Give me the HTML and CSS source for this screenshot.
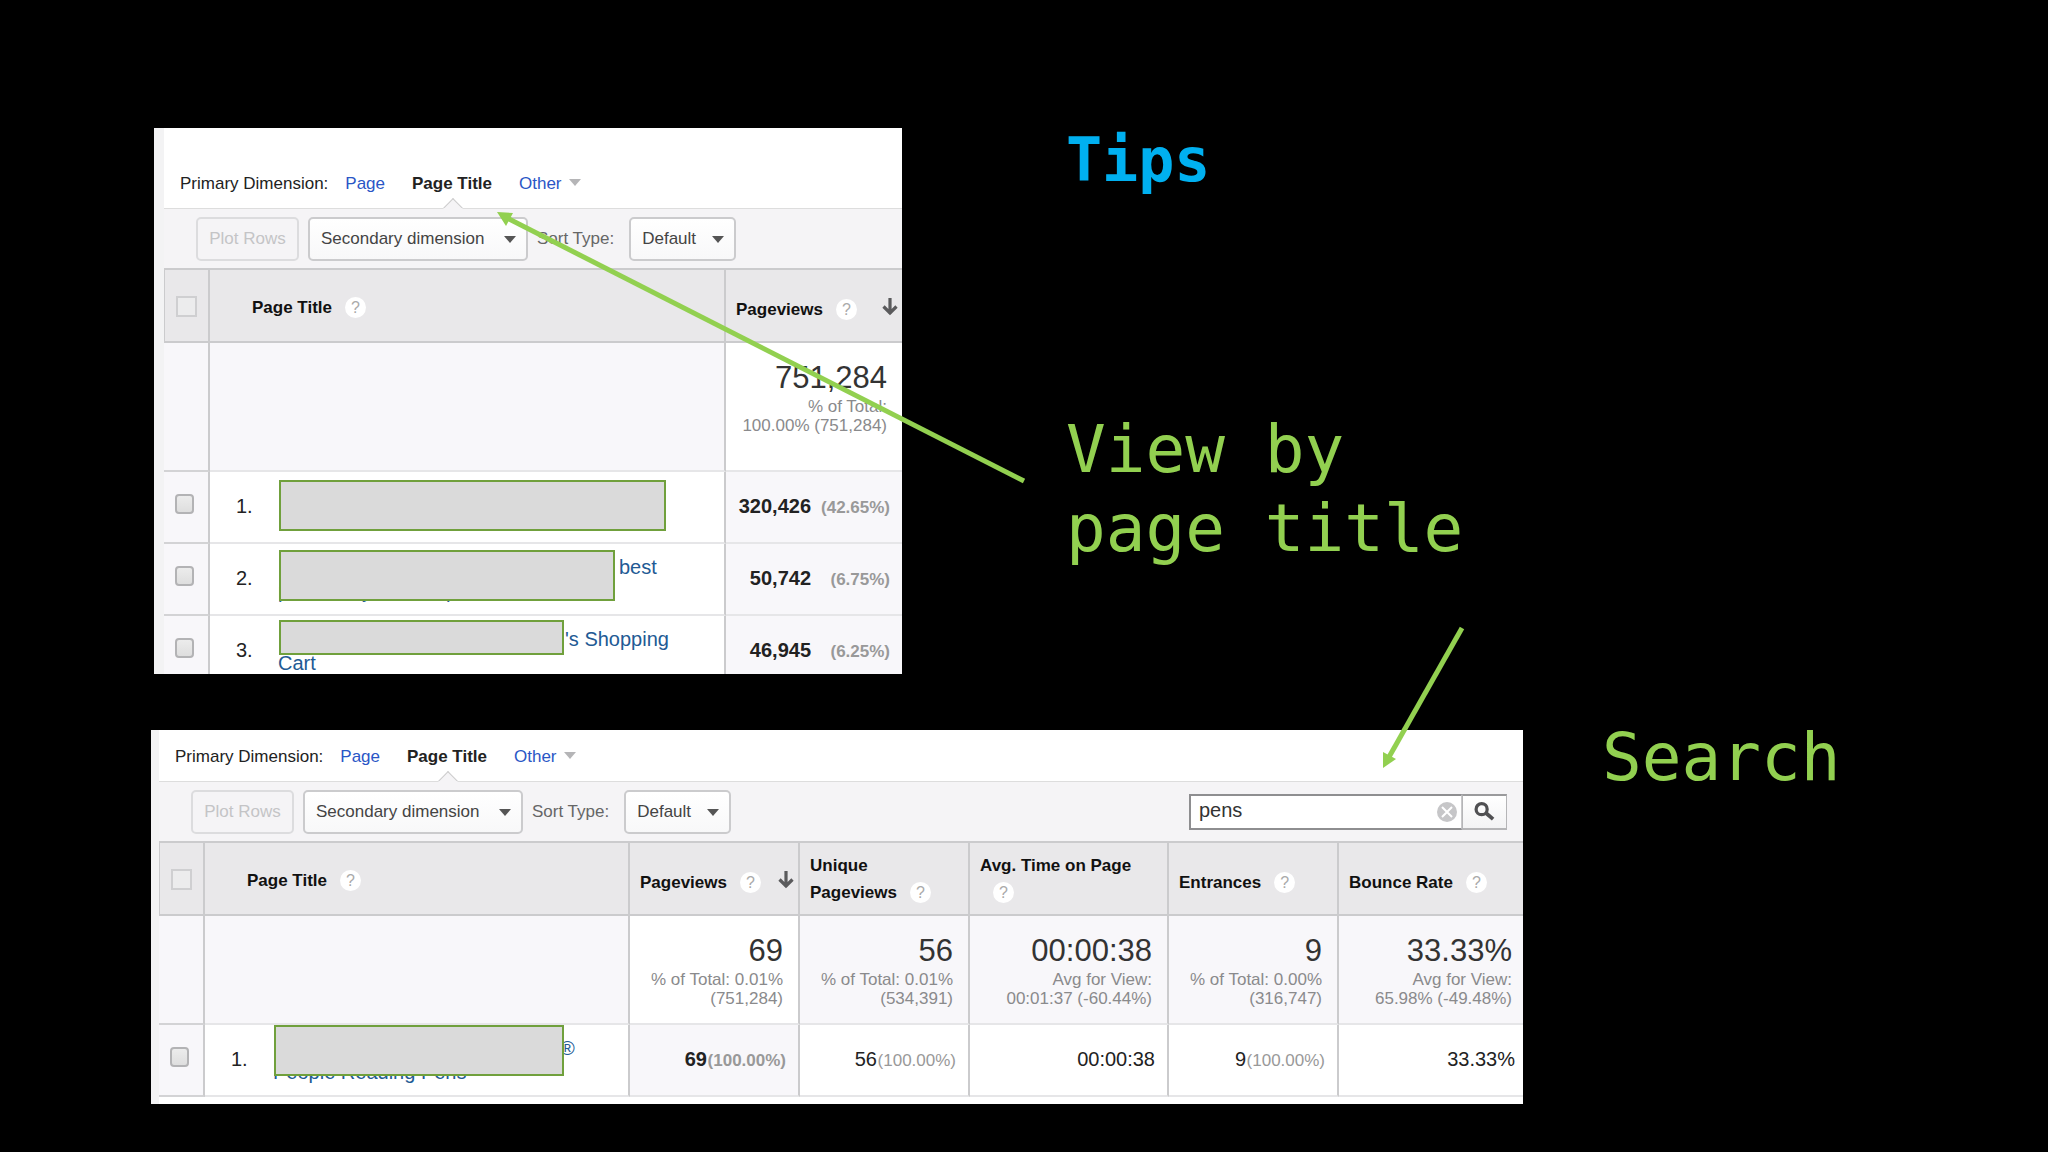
FILE: index.html
```html
<!DOCTYPE html>
<html lang="en">
<head>
  <meta charset="utf-8">
  <title>Tips</title>
  <link rel="stylesheet" href="styles.css">
</head>
<body>

<main class="slide">

  <section class="row-top">
    <div class="panel panel-title">
      <nav class="tabs">
        <span class="tabs-label">Primary Dimension:</span>
        <a href="#">Page</a>
        <a href="#" class="active">Page Title</a>
        <a href="#" class="has-caret">Other</a>
      </nav>

      <div class="toolbar">
        <button type="button" class="plot" disabled>Plot Rows</button>
        <span class="dropdown secondary">
          <select aria-label="Secondary dimension"><option>Secondary dimension</option></select>
        </span>
        <label for="sort1">Sort Type:</label>
        <span class="dropdown sort">
          <select id="sort1"><option>Default</option></select>
        </span>
      </div>

      <table>
        <colgroup>
          <col class="col-check"><col><col class="col-views">
        </colgroup>
        <thead>
          <tr>
            <th class="check"><input type="checkbox" aria-label="Select all" disabled></th>
            <th class="title">Page Title<span class="help">?</span></th>
            <th class="metric">Pageviews<span class="help">?</span>
              <svg class="sort-arrow" viewBox="0 0 16 18"><path d="M8 0v16M1.500 8.500L8 15l6.500-6.500" fill="none" stroke="#5a5a5c" stroke-width="3.200"/></svg>
            </th>
          </tr>
        </thead>
        <tbody>
          <tr class="summary">
            <td class="check"></td>
            <td></td>
            <td class="num sorted"><b>751,284</b><small>% of Total:<br>100.00% (751,284)</small></td>
          </tr>
          <tr>
            <td class="check"><input type="checkbox" aria-label="Select row 1"></td>
            <td class="name"><div><span class="index">1.</span><span class="redact wide"></span></div></td>
            <td class="num sorted">320,426<span class="pct">(42.65%)</span></td>
          </tr>
          <tr>
            <td class="check"><input type="checkbox" aria-label="Select row 2"></td>
            <td class="name"><div><span class="index">2.</span><a href="#" class="best"><span>best</span><span class="tails"><i>p</i><i>y</i><i>p</i></span></a><span class="redact medium"></span></div></td>
            <td class="num sorted">50,742<span class="pct">(6.75%)</span></td>
          </tr>
          <tr class="cut">
            <td class="check"><input type="checkbox" aria-label="Select row 3"></td>
            <td class="name"><div><span class="index">3.</span><a href="#" class="cart"><span>'s Shopping</span><br>Cart</a><span class="redact low"></span></div></td>
            <td class="num sorted">46,945<span class="pct">(6.25%)</span></td>
          </tr>
        </tbody>
      </table>
    </div>

    <div class="notes">
      <h1>Tips</h1>
      <p>View by<br>page title</p>
    </div>
  </section>

  <section class="row-bottom">
    <div class="panel panel-search">
      <nav class="tabs">
        <span class="tabs-label">Primary Dimension:</span>
        <a href="#">Page</a>
        <a href="#" class="active">Page Title</a>
        <a href="#" class="has-caret">Other</a>
      </nav>

      <div class="toolbar">
        <button type="button" class="plot" disabled>Plot Rows</button>
        <span class="dropdown secondary">
          <select aria-label="Secondary dimension"><option>Secondary dimension</option></select>
        </span>
        <label for="sort2">Sort Type:</label>
        <span class="dropdown sort">
          <select id="sort2"><option>Default</option></select>
        </span>
        <form class="search">
          <input type="text" value="pens" aria-label="Search">
          <button type="button" class="clear" aria-label="Clear">
            <svg viewBox="0 0 20 20"><circle cx="10" cy="10" r="10" fill="#c6c6c8"/><path d="M5 5l10 10M15 5L5 15" stroke="#fff" stroke-width="2"/></svg>
          </button>
          <button type="button" class="go" aria-label="Search">
            <svg viewBox="0 0 22 20"><circle cx="8" cy="7.500" r="5.800" fill="none" stroke="#505052" stroke-width="3.400"/><path d="M12.500 11.500L20 18" stroke="#505052" stroke-width="4"/></svg>
          </button>
        </form>
      </div>

      <table>
        <colgroup>
          <col class="col-check"><col><col class="col-metric"><col class="col-metric"><col class="col-time"><col class="col-metric"><col class="col-bounce">
        </colgroup>
        <thead>
          <tr>
            <th class="check"><input type="checkbox" aria-label="Select all" disabled></th>
            <th class="title">Page Title<span class="help">?</span></th>
            <th class="metric">Pageviews<span class="help">?</span>
              <svg class="sort-arrow" viewBox="0 0 16 18"><path d="M8 0v16M1.500 8.500L8 15l6.500-6.500" fill="none" stroke="#5a5a5c" stroke-width="3.200"/></svg>
            </th>
            <th class="metric two-line">Unique Pageviews<span class="help">?</span></th>
            <th class="metric two-line">Avg. Time on Page<span class="help">?</span></th>
            <th class="metric">Entrances<span class="help">?</span></th>
            <th class="metric">Bounce Rate<span class="help">?</span></th>
          </tr>
        </thead>
        <tbody>
          <tr class="summary">
            <td class="check"></td>
            <td></td>
            <td class="num sorted"><b>69</b><small>% of Total: 0.01%<br>(751,284)</small></td>
            <td class="num"><b>56</b><small>% of Total: 0.01%<br>(534,391)</small></td>
            <td class="num"><b>00:00:38</b><small>Avg for View:<br>00:01:37 (-60.44%)</small></td>
            <td class="num"><b>9</b><small>% of Total: 0.00%<br>(316,747)</small></td>
            <td class="num"><b>33.33%</b><small>Avg for View:<br>65.98% (-49.48%)</small></td>
          </tr>
          <tr>
            <td class="check"><input type="checkbox" aria-label="Select row 1"></td>
            <td class="name"><div><span class="index">1.</span><a href="#" class="pens"><span>®</span><br>People Reading Pens</a><span class="redact top"></span></div></td>
            <td class="num sorted">69<span class="pct">(100.00%)</span></td>
            <td class="num">56<span class="pct">(100.00%)</span></td>
            <td class="num">00:00:38</td>
            <td class="num">9<span class="pct">(100.00%)</span></td>
            <td class="num">33.33%</td>
          </tr>
        </tbody>
      </table>
    </div>

    <p class="search-note">Search</p>
  </section>

  <!-- arrows from the notes to the controls -->
  <svg class="arrows" viewBox="0 0 2048 1152">
    <g stroke="#92d050" stroke-width="5">
      <path d="M1024 481L507 218"/>
      <path d="M1462 628L1389 757"/>
    </g>
    <g fill="#92d050">
      <path d="M497 212l16 1-7 13z"/>
      <path d="M1383 768v-16l13 7z"/>
    </g>
  </svg>

</main>

</body>
</html>
```
FILE: styles.css
```css
* {
  box-sizing: border-box;
}

body {
  margin: 0;
  background: #000;
  font-family: "Liberation Sans", Arial, sans-serif;
  font-size: 17px;
  color: #222;
}

a {
  color: #2a56c6;
  text-decoration: none;
}

.slide {
  position: relative;
  min-height: 100vh;
  padding-top: 128px;
}

.row-top {
  display: grid;
  grid-template-columns: 748fr 982fr;
  column-gap: 164px;
  margin-left: 154px;
}

.row-bottom {
  display: grid;
  grid-template-columns: 1372fr 446fr;
  column-gap: 79px;
  margin: 56px 0 0 151px;
}

/* big text */
.notes h1,
.notes p,
.search-note {
  margin: 0;
  font-family: Consolas, "DejaVu Sans Mono", monospace;
}

.notes h1 {
  font-size: 60px;
  line-height: 64px;
  color: #00b0f0;
}

.notes p {
  margin-top: 218px;
  font-size: 66px;
  line-height: 79px;
  color: #92d050;
}

.search-note {
  font-size: 66px;
  line-height: 56px;
  color: #92d050;
}

.arrows {
  position: absolute;
  top: 0;
  left: 0;
  width: 100%;
  pointer-events: none;
}

/* report panels */
.panel {
  background: #fff;
  border-left: 10px solid #f3f3f4;
}

.panel-title {
  --edge: 12px;
}

.panel-search {
  --edge: 8px;
  border-left-width: 8px;
  padding-bottom: 7px;
}

.tabs {
  display: flex;
  gap: 27px;
  padding: 46px 16px 14px;
  line-height: 20px;
}

.panel-search .tabs {
  padding-top: 17px;
}

.tabs-label {
  margin-right: -10px;
}

.tabs .active {
  position: relative;
  color: #222;
  font-weight: bold;
}

.tabs .active::after {
  content: "";
  position: absolute;
  left: 50%;
  bottom: -21px;
  width: 12px;
  height: 12px;
  margin-left: -6px;
  background: #f5f4f6;
  border: 1px solid #ccc;
  border-right-color: transparent;
  border-bottom-color: transparent;
  transform: rotate(45deg);
}

.has-caret::after {
  content: "";
  display: inline-block;
  margin-left: 7px;
  vertical-align: 3px;
  border: 6px solid transparent;
  border-top: 7px solid #b5b5b7;
  border-bottom: 0;
}

.toolbar {
  display: flex;
  align-items: center;
  gap: 9px;
  height: 60px;
  padding: 0 16px 0 32px;
  background: #f5f4f6;
  border-top: 1px solid #ddd;
}

.toolbar label {
  margin-right: 6px;
  color: #666;
}

.plot,
.dropdown select {
  height: 44px;
  border: 2px solid #cbcbcd;
  border-radius: 5px;
  background: linear-gradient(#fff, #f8f8f9);
  font: inherit;
  color: #444;
}

.plot {
  width: 103px;
  padding: 0;
  border-color: #dcdcde;
  background: #f5f4f6;
  color: #c4c4c6;
}

.dropdown {
  position: relative;
}

.dropdown select {
  width: 100%;
  padding: 0 11px;
  appearance: none;
}

.dropdown::after {
  content: "";
  position: absolute;
  right: 12px;
  top: 19px;
  border: 6px solid transparent;
  border-top: 7px solid #555;
  border-bottom: 0;
}

.secondary {
  width: 220px;
}

.sort {
  width: 107px;
}

.search {
  position: relative;
  display: flex;
  width: 318px;
  height: 36px;
  margin-left: auto;
}

.search input {
  flex: 1;
  min-width: 0;
  padding: 0 40px 2px 8px;
  border: 2px solid #8e8e90;
  border-right: 1px solid #c8c8ca;
  font: inherit;
  font-size: 20px;
  color: #333;
}

.search .clear {
  position: absolute;
  right: 50px;
  top: 8px;
  width: 20px;
  height: 20px;
  padding: 0;
  border: 0;
  background: none;
}

.search svg {
  display: block;
  width: 100%;
}

.search .go {
  width: 45px;
  padding: 0 11px;
  border: 1px solid #b5b5b7;
  border-top: 2px solid #9a9a9c;
  border-bottom-width: 2px;
  background: linear-gradient(#fff, #f3f3f4);
}

/* tables */
table {
  width: 100%;
  table-layout: fixed;
  border-collapse: separate;
  border-spacing: 0;
}

.col-check { width: 46px; }
.col-views { width: 176px; }
.col-metric { width: 170px; }
.col-time { width: 199px; }
.col-bounce { width: 184px; }

th,
td {
  padding: 0;
  border-right: 2px solid #cbcbcd;
  vertical-align: top;
}

th:last-child,
td:last-child {
  border-right: 0;
}

th {
  position: relative;
  height: 75px;
  background: #e9e8ea;
  border-top: 2px solid #cbcbcd;
  border-bottom: 2px solid #cbcbcd;
  color: #111;
  text-align: left;
  line-height: 27px;
  vertical-align: middle;
}

th.check {
  padding-top: 1px;
  border-left: 1px solid #cbcbcd;
}

th.title {
  padding: 3px 0 0 42px;
}

th.metric {
  padding: 8px 10px 0;
}

th.two-line {
  padding-top: 0;
}

.help {
  display: inline-block;
  width: 21px;
  height: 21px;
  margin-left: 13px;
  border-radius: 50%;
  background: #fff;
  color: #aaa;
  font-weight: normal;
  font-size: 16px;
  line-height: 21px;
  text-align: center;
}

.sort-arrow {
  position: absolute;
  right: 4px;
  top: 28px;
  width: 16px;
}

td {
  height: 72px;
  border-bottom: 2px solid #e6e6e8;
}

.check {
  text-align: center;
}

td.check {
  background: #f8f7fa;
  border-bottom-color: #d3d3d5;
  padding: 22px 4px 0 0;
}

.check input {
  display: block;
  width: 19px;
  height: 20px;
  margin: 0 auto;
  appearance: none;
  border: 2px solid #b3b3b5;
  border-radius: 4px;
  background: linear-gradient(#ececec, #dedede);
}

th.check input {
  width: 21px;
  height: 21px;
  border-color: #cfcfd1;
  border-radius: 0;
  background: #ececed;
}

.name div {
  position: relative;
  display: flex;
  padding: 11px 0 0 26px;
  font-size: 20px;
  line-height: 24px;
}

.name a {
  color: #225a94;
}

.index {
  flex: 0 0 42px;
  padding-top: 11px;
  height: 35px;
}

.best span:first-child { margin-left: 341px; }
.cart span { margin-left: 287px; }
.pens span { margin-left: 287px; }

.tails {
  display: flex;
  gap: 64px;
}

.tails i {
  font-style: normal;
  width: 20px;
}

/* grey boxes that hide the real page names */
.redact {
  position: absolute;
  left: 69px;
  top: 8px;
  height: 51px;
  background: #dadada;
  border: 2px solid #70a03c;
}

.redact.wide { width: 387px; }
.redact.medium { width: 336px; top: 6px; }
.redact.low { width: 285px; height: 35px; top: 4px; }
.redact.top { width: 290px; top: 0; }

.num {
  padding: 22px 12px 0 0;
  text-align: right;
  font-size: 20px;
  line-height: 24px;
}

.sorted {
  background: #f8f7fa;
  font-weight: bold;
}

.num:last-child {
  padding-right: var(--edge);
}

.pct {
  display: inline-block;
  min-width: 79px;
  font-size: 17px;
  color: #999;
}

.summary td {
  height: 109px;
  background: #f8f7fa;
}

.panel-title .summary td {
  height: 129px;
}

.summary .num {
  padding-top: 16px;
  padding-right: 15px;
  font-weight: normal;
}

.summary .num:last-child {
  padding-right: calc(var(--edge) + 3px);
}

.summary .sorted {
  background: #fff;
}

.summary b {
  display: block;
  font-size: 31px;
  line-height: 38px;
  font-weight: normal;
  color: #333;
}

.summary small {
  display: block;
  font-size: 17px;
  line-height: 19px;
  color: #8a8a8c;
}

/* the first panel stops in the middle of its third row */
.cut td {
  height: 58px;
  border-bottom: 0;
}

.cut .name div {
  height: 58px;
}
```
